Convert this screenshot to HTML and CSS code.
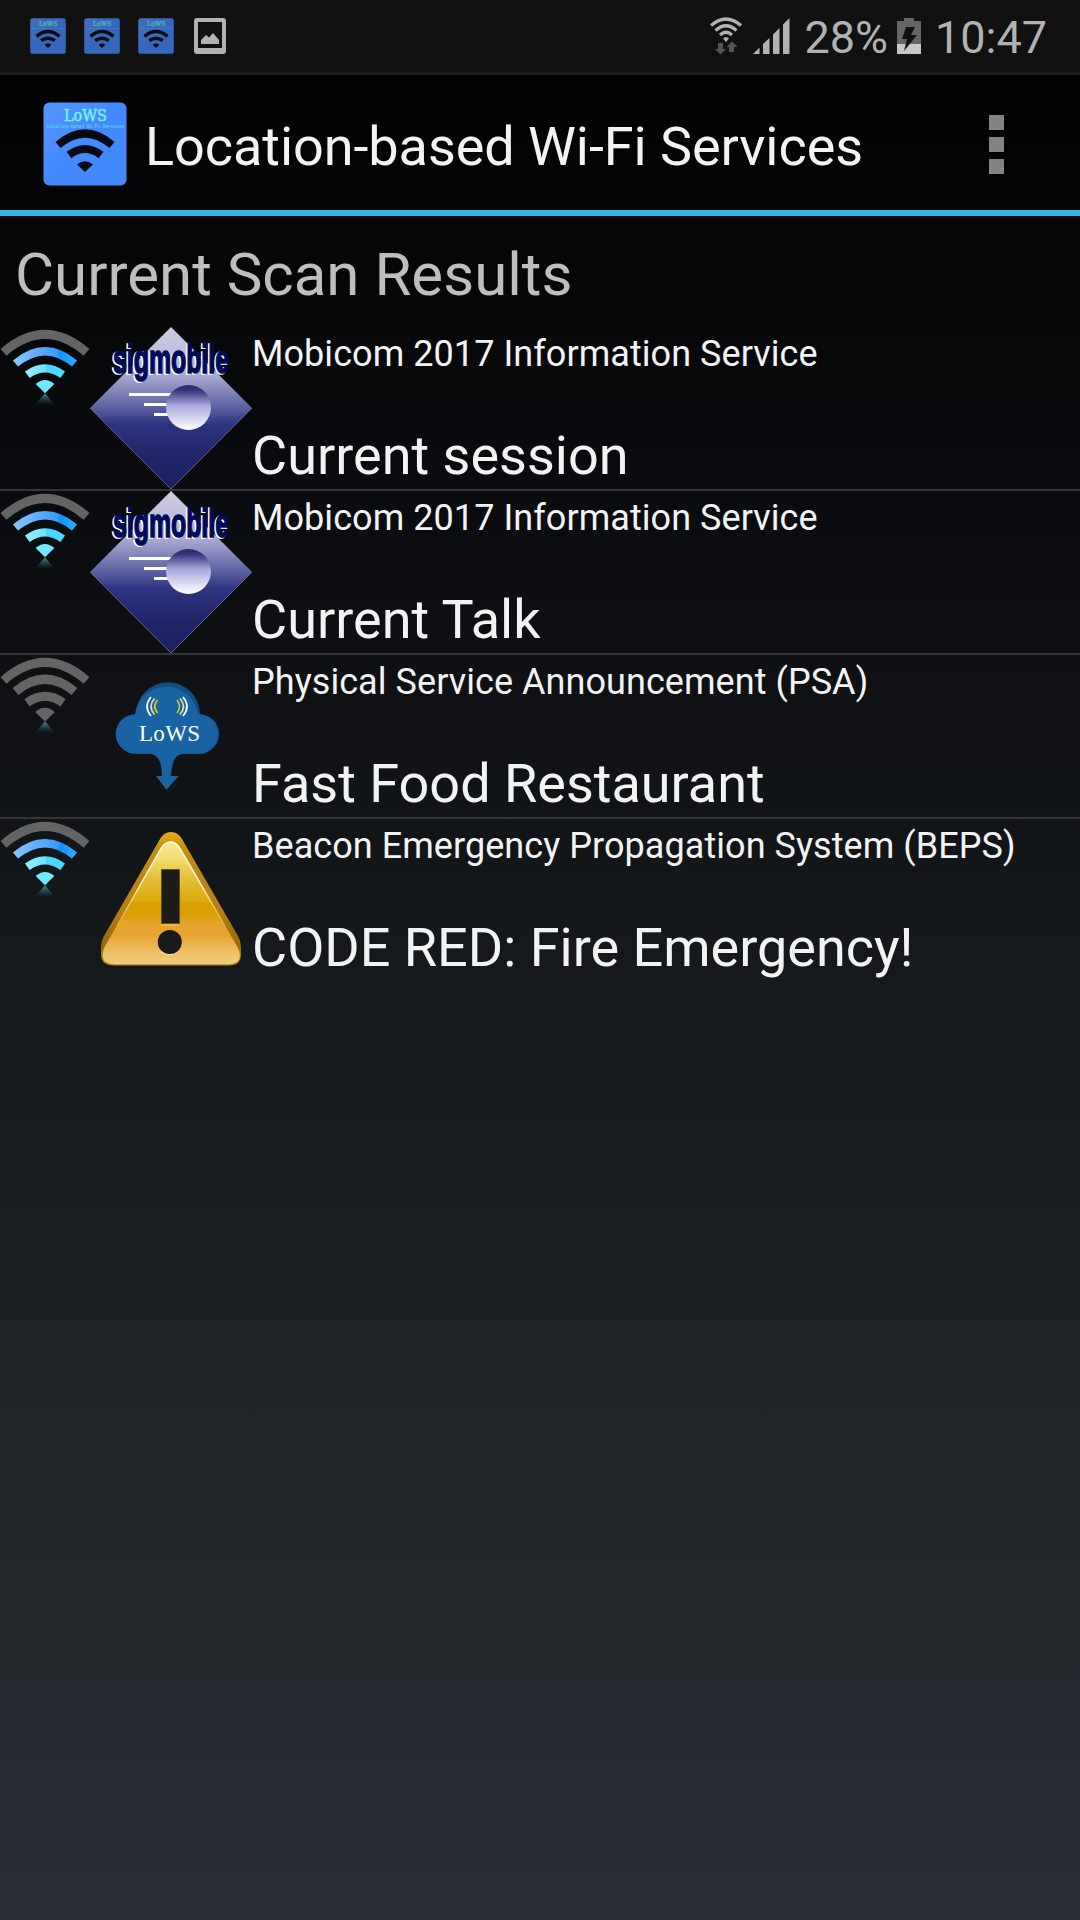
FILE: index.html
```html
<!DOCTYPE html>
<html lang="en">
<head>
<meta charset="utf-8">
<title>Location-based Wi-Fi Services</title>
<link rel="stylesheet" href="styles.css">
</head>
<body>
<svg class="defs" width="0" height="0" aria-hidden="true">
  <defs>
    <linearGradient id="blueTile" x1="0" y1="0" x2="1" y2="1"><stop offset="0" stop-color="#5596ff"/><stop offset=".5" stop-color="#4389fe"/><stop offset="1" stop-color="#4389fe"/></linearGradient>
    <linearGradient id="arcBlue" x1="0" y1="0" x2="1" y2="0"><stop offset="0" stop-color="#7fc8ff"/><stop offset=".35" stop-color="#62acff"/><stop offset=".7" stop-color="#3d9cfb"/><stop offset=".76" stop-color="#0f93fb"/><stop offset="1" stop-color="#29adff"/></linearGradient>
    <linearGradient id="arcCyan" x1="0" y1="0" x2="1" y2="0"><stop offset="0" stop-color="#92ecff"/><stop offset=".5" stop-color="#6fe3ff"/><stop offset=".56" stop-color="#49d4ff"/><stop offset="1" stop-color="#4adcff"/></linearGradient>
    <linearGradient id="reflection" x1="0" y1="0" x2="0" y2="1"><stop offset="0" stop-color="#4e9aa2" stop-opacity=".9"/><stop offset="1" stop-color="#2c626a" stop-opacity="0"/></linearGradient>
    <linearGradient id="diamond" x1="0" y1="0" x2="0" y2="1"><stop offset="0" stop-color="#cfcde1"/><stop offset=".18" stop-color="#bcbbda"/><stop offset=".3" stop-color="#a9a8d2"/><stop offset=".5" stop-color="#5a609f"/><stop offset=".6" stop-color="#2e3480"/><stop offset=".8" stop-color="#202567"/><stop offset="1" stop-color="#1b2062"/></linearGradient>
    <linearGradient id="ball" x1="0" y1="0" x2="0" y2="1"><stop offset="0" stop-color="#252a6c"/><stop offset=".12" stop-color="#343779"/><stop offset=".45" stop-color="#a9a8dc"/><stop offset="1" stop-color="#fff"/></linearGradient>
    <linearGradient id="warnEdge" x1="0" y1="0" x2="0" y2="1"><stop offset="0" stop-color="#e7ae14"/><stop offset=".12" stop-color="#c58c14"/><stop offset=".6" stop-color="#b67d14"/><stop offset=".85" stop-color="#98690d"/><stop offset="1" stop-color="#bd8411"/></linearGradient>
    <linearGradient id="warnFace" x1="0" y1="0" x2="0" y2="1"><stop offset="0" stop-color="#f8eb8e"/><stop offset=".13" stop-color="#f3df73"/><stop offset=".3" stop-color="#e4bf37"/><stop offset=".49" stop-color="#dba90d"/><stop offset=".5" stop-color="#d99f02"/><stop offset=".6" stop-color="#da9f05"/><stop offset=".66" stop-color="#e5a42c"/><stop offset=".77" stop-color="#e6a52e"/><stop offset=".79" stop-color="#e8ac3d"/><stop offset="1" stop-color="#f2ce82"/></linearGradient>
    <linearGradient id="warnShine" x1="0" y1="0" x2="0" y2="1"><stop offset="0" stop-color="#fffae8"/><stop offset=".5" stop-color="#fff0c4"/><stop offset="1" stop-color="#f3cf7c" stop-opacity=".3"/></linearGradient>

    <symbol id="lows-app" viewBox="0 0 84 84">
      <rect x=".5" y=".5" width="83" height="83" rx="6" fill="url(#blueTile)"/>
      <text class="tile-name" x="21" y="18.500" textLength="43" lengthAdjust="spacingAndGlyphs">LoWS</text>
      <text class="tile-sub" x="4" y="25.500" textLength="77" lengthAdjust="spacingAndGlyphs">Location-based Wi-Fi Services</text>
      <g fill="none" stroke="#060a12" stroke-width="8">
        <path d="M15 43Q42 20 69 43"/><path d="M26 53Q42 41 58 53"/>
      </g>
      <path d="M34 62.500Q42 56 50 62.500L42 70Z" fill="#060a12"/>
    </symbol>

    <symbol id="wifi-strong" viewBox="0 0 90 80">
      <path d="M3.500 25.300Q45 -10.500 86.500 25.300" fill="none" stroke="#646464" stroke-width="9"/>
      <path d="M15.500 36.500Q45 12 74.500 36.500" fill="none" stroke="url(#arcBlue)" stroke-width="8"/>
      <path d="M27.300 47.800Q45 35 62.700 47.800" fill="none" stroke="url(#arcCyan)" stroke-width="8"/>
      <path d="M35.700 57Q45 49 54.300 57L45 66.300Z" fill="#70e9ff"/>
      <path d="M45 66.300L55 78H35Z" fill="url(#reflection)"/>
    </symbol>
    <symbol id="wifi-weak" viewBox="0 0 90 80">
      <g fill="none" stroke="#646464" stroke-width="9">
        <path d="M3.500 25.300Q45 -10.500 86.500 25.300"/><path d="M15.500 36.500Q45 12 74.500 36.500"/><path d="M27 47.800Q45 35 63 47.800"/>
      </g>
      <path d="M35.200 57Q45 48.500 54.800 57L45 66.500Z" fill="#646464"/>
      <path d="M45 66.300L55 78H35Z" fill="url(#reflection)"/>
    </symbol>

    <symbol id="sigmobile" viewBox="0 0 162 162">
      <path d="M81 0L162 81L81 162L0 81Z" fill="url(#diamond)"/>
      <path d="M162 81L81 162L0 81" fill="none" stroke="#7a7cae" stroke-width=".7"/>
      <path d="M39 67.500H81M54 77.500H81M64 87.500H81" stroke="#fff" stroke-width="3.200"/>
      <circle cx="98.500" cy="80.500" r="22.500" fill="url(#ball)"/>
      <text class="sig-name sig-shadow" x="21.500" y="47" textLength="116" lengthAdjust="spacingAndGlyphs">sigmobile</text>
      <text class="sig-name" x="23" y="45.500" textLength="116" lengthAdjust="spacingAndGlyphs">sigmobile</text>
    </symbol>

    <symbol id="lows-cloud" viewBox="0 0 162 162">
      <path d="M46 59.200A31.800 31.800 0 0 1 110 59.200A19.800 19.800 0 0 1 109 98.800H93C84 100 82 110 81 121H89L76.500 134.500L66 121H72C72 110 70 101 61 98.800H46Z" fill="#114d80"/>
      <path d="M45 59.200A31.800 31.800 0 0 1 108 59.200A19.800 19.800 0 0 1 108 98.800H92C83 100 81 110 80.500 121H88L76.500 134.500L66 121H72C72 110 70 101 61 98.800H46A19.800 19.800 0 0 1 45 59.200Z" fill="#1a63a3"/>
      <g fill="none" stroke-width="1.600">
        <path d="M61 42Q53 51.500 61 61M93 42Q101 51.500 93 61" stroke="#fff"/>
        <path d="M64.500 43.500Q57.500 51.500 64.500 59.500M90 43.500Q97 51.500 90 59.500" stroke="#e8dfa8"/>
        <path d="M67.500 45Q62 51.500 67.500 58M87 45Q92 51.500 87 58" stroke="#d4cf18"/>
      </g>
      <text class="cloud-name" x="49" y="85.700" textLength="61" lengthAdjust="spacing">LoWS</text>
    </symbol>

    <symbol id="warning" viewBox="0 0 162 162">
      <path d="M81 13Q88 13 92 20L148 117Q151 122 151 128V135.500Q151 146.500 139 146.500H24Q11 146.500 11 135.500V128Q11 122 14 117L70 20Q74 13 81 13Z" fill="url(#warnEdge)"/>
      <path d="M81 22.500Q86 22.500 90 29.500L147.500 128Q155 144.500 139 145.200H24Q8 144.500 14.500 128L71 29.500Q75 22.500 81 22.500Z" fill="url(#warnFace)"/>
      <path d="M27 107L71 29.500Q75 23 81 23Q86 23 90 29.500L135 107" fill="none" stroke="url(#warnShine)" stroke-width="1.500"/>
      <path d="M71.500 132.500Q79 138.500 87 132.500" fill="none" stroke="#f8d895" stroke-width="2"/>
      <rect x="71.500" y="50.500" width="18" height="54" fill="#1d1c19" stroke="#5e4f17" stroke-width=".8"/>
      <path d="M71 106H90" stroke="#f1bd5a" stroke-width="1.500"/>
      <circle cx="79.800" cy="123" r="12" fill="#191919"/>
    </symbol>
  </defs>
</svg>

<header class="status-bar">
  <div class="notifications">
    <svg class="tile-small"><use href="#lows-app"/></svg>
    <svg class="tile-small"><use href="#lows-app"/></svg>
    <svg class="tile-small"><use href="#lows-app"/></svg>
    <svg class="picture" viewBox="0 0 32 36"><path fill="#b2b2b2" fill-rule="evenodd" d="M3 0H29Q32 0 32 3V33Q32 36 29 36H3Q0 36 0 33V3Q0 0 3 0ZM4 4V30H28V4Z"/><path fill="#b2b2b2" d="M7 26V22L12 17L15 19.500L19 15L25 22V26Z"/></svg>
  </div>
  <div class="system">
    <svg class="net" viewBox="0 0 32 38">
      <g fill="none" stroke="#b2b2b2" stroke-width="3.200"><path d="M1 8.500Q16 -4.500 31 8.500"/><path d="M5.500 13.500Q16 4 26.500 13.500"/><path d="M10 18Q16 12.500 22 18"/></g>
      <path fill="#b2b2b2" d="M13 21.500Q16 18.500 19 21.500L16 25Z"/>
      <path fill="#555" d="M8 26H13V32H16L10.500 37.500L5 32H8ZM19 35V30H16.500L22 24.500L27.500 30H24V35Z"/>
    </svg>
    <svg class="cell" viewBox="0 0 37 36"><path fill="#b2b2b2" d="M0 36L6.500 29.500V36ZM10 26L16.500 20V36H10ZM20 16.500L26.500 10V36H20ZM30 6.500L36.500 0V36H30Z"/></svg>
    <span class="percent">28%</span>
    <svg class="battery" viewBox="0 0 24 36"><path fill="#666" d="M7 0H17V3H24V27H0V3H7Z"/><path fill="#c8c8c8" d="M0 26H24V36H0Z"/><path fill="#111" d="M9 9H18L14 17H20L7 33L10 21H5Z"/></svg>
    <span class="clock">10:47</span>
  </div>
</header>

<div class="action-bar">
  <svg class="app-icon"><use href="#lows-app"/></svg>
  <h1 class="app-title">Location-based Wi-Fi Services</h1>
  <div class="overflow"><i></i><i></i><i></i></div>
</div>

<main>
  <h2 class="section-title">Current Scan Results</h2>
  <ul class="results">
    <li class="result">
      <svg class="signal"><use href="#wifi-strong"/></svg>
      <svg class="logo"><use href="#sigmobile"/></svg>
      <div class="info"><p class="service">Mobicom 2017 Information Service</p><p class="message">Current session</p></div>
    </li>
    <li class="result">
      <svg class="signal"><use href="#wifi-strong"/></svg>
      <svg class="logo"><use href="#sigmobile"/></svg>
      <div class="info"><p class="service">Mobicom 2017 Information Service</p><p class="message">Current Talk</p></div>
    </li>
    <li class="result">
      <svg class="signal"><use href="#wifi-weak"/></svg>
      <svg class="logo"><use href="#lows-cloud"/></svg>
      <div class="info"><p class="service">Physical Service Announcement (PSA)</p><p class="message">Fast Food Restaurant</p></div>
    </li>
    <li class="result">
      <svg class="signal"><use href="#wifi-strong"/></svg>
      <svg class="logo"><use href="#warning"/></svg>
      <div class="info"><p class="service">Beacon Emergency Propagation System (BEPS)</p><p class="message">CODE RED: Fire Emergency!</p></div>
    </li>
  </ul>
</main>
</body>
</html>
```
FILE: styles.css
```css
* { box-sizing: border-box; margin: 0; padding: 0; }

html { height: 100%; }

body {
  height: 1920px;
  overflow: hidden;
  font-family: Roboto, sans-serif;
  color: #f3f3f3;
  background: linear-gradient(#000 0, #0a0b0e 25%, #121518 43%, #171c1e 55%, #22272b 82%, #292c35 100%);
}

.defs { position: absolute; }
svg { display: block; flex: none; }

.status-bar {
  display: flex;
  justify-content: space-between;
  height: 75px;
  padding: 0 33px 0 30px;
  background: #111;
  border-bottom: 3px solid #1e1e1e;
}

.notifications { display: flex; gap: 18px; padding-top: 18px; }
.tile-small { width: 36px; height: 36px; opacity: .72; }
.picture { width: 32px; height: 36px; margin-left: 2px; }

.system { display: flex; align-items: flex-start; color: #b2b2b2; font-size: 45px; line-height: 76px; }
.net { width: 32px; height: 38px; margin-top: 17px; }
.cell { width: 37px; height: 36px; margin: 18px 14px 0 11px; }
.battery { width: 24px; height: 36px; margin: 18px 14px 0 9px; }

.action-bar {
  display: flex;
  align-items: center;
  height: 141px;
  padding: 3px 76px 0 43px;
  border-bottom: 6px solid #33b5e5;
}
.app-icon { width: 84px; height: 84px; }
.app-title { margin-left: 18px; padding-top: 5px; font-size: 54px; font-weight: 400; line-height: 64px; letter-spacing: -.06px; white-space: nowrap; }
.overflow { display: flex; flex-direction: column; gap: 7px; margin-left: auto; }
.overflow i { width: 15px; height: 15px; background: #838383; }

.section-title { height: 111px; padding: 24px 0 0 15px; font-size: 60px; font-weight: 400; line-height: 70px; color: #bebebe; }

.results { list-style: none; }
.result { display: flex; height: 164px; border-bottom: 2px solid #343638; }
.result:last-child { border-bottom-color: transparent; }
.signal { width: 90px; height: 80px; }
.logo { width: 162px; height: 162px; }
.info { display: flex; flex-direction: column; justify-content: space-between; white-space: nowrap; }
.service { padding-top: 6px; font-size: 36px; line-height: 42px; letter-spacing: .06px; }
.message { padding-bottom: 1px; font-size: 54px; line-height: 64px; }

.tile-name { font: 16px "DejaVu Serif", serif; fill: #72f3f5; stroke: #72f3f5; stroke-width: .5; }
.tile-sub { font: bold 5.500px "Liberation Mono", monospace; fill: #5ccdfa; }
.sig-name { font: bold 40px "Liberation Sans", sans-serif; fill: #000b59; stroke: #000b59; stroke-width: 1.600; }
.sig-shadow { fill: #fff; stroke: #fff; }
.cloud-name { font: 23px "Liberation Serif", serif; fill: #fff; }
```
